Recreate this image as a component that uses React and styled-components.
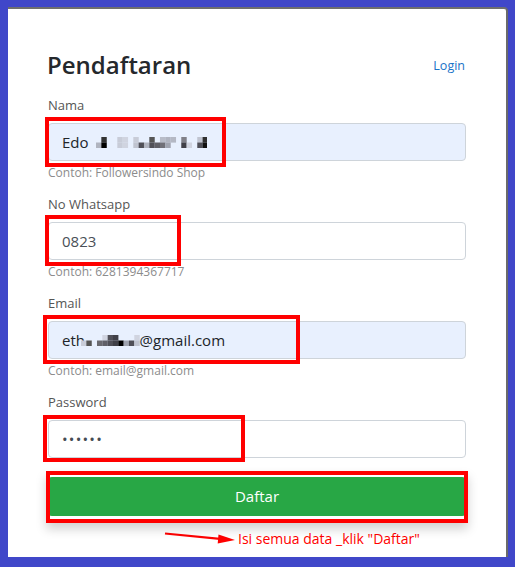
import React from "react";
import styled, { createGlobalStyle } from "styled-components";

const GlobalStyle = createGlobalStyle`
  * { box-sizing: border-box; }
  html, body {
    margin: 0;
    padding: 0;
    background: #4047c9;
  }
  body {
    font-family: "Open Sans", "Noto Sans", sans-serif;
  }
`;

const Page = styled.div`
  width: 515px;
  height: 567px;
  padding: 7px 0 0 8px;
`;

const Card = styled.div`
  width: 500px;
  height: 550px;
  background: #fff;
  border-top: 2px solid #6f6f6f;
  border-right: 2px solid #6a6a6a;
  border-top-right-radius: 4px;
  padding: 42px 40px 0 40px;
`;

const Header = styled.div`
  display: flex;
  justify-content: space-between;
  align-items: center;
  margin-bottom: 16px;
`;

const Title = styled.h1`
  margin: 0 0 0 -1px;
  font-size: 24px;
  font-weight: 600;
  line-height: 1.2;
  color: #25282c;
`;

const LoginLink = styled.a`
  font-size: 12.5px;
  color: #1a73c8;
  text-decoration: none;
  margin-right: 1px;
`;

const Field = styled.div`
  margin-bottom: ${(p) => (p.$last ? "19px" : "14px")};
`;

const Label = styled.div`
  font-size: 13px;
  line-height: 18px;
  color: #555;
  margin-bottom: 9px;
`;

const InputWrap = styled.div`
  position: relative;
`;

const InputBox = styled.div`
  height: 38px;
  border: 1px solid #ced4da;
  border-radius: 4px;
  background: ${(p) => (p.$autofill ? "#e8f0fe" : "#fff")};
  padding: 0 13px;
  font-size: 15px;
  line-height: 36px;
  color: ${(p) => (p.$muted ? "#495057" : "#212529")};
  white-space: nowrap;
`;

const Dots = styled.span`
  font-size: 15px;
  letter-spacing: 1.2px;
  color: #454c54;
`;

const Hint = styled.div`
  font-size: 12px;
  line-height: 16px;
  color: #8c8c8c;
  margin-top: 4px;
`;

const Mark = styled.div`
  position: absolute;
  left: ${(p) => p.$x}px;
  top: ${(p) => p.$y}px;
  width: ${(p) => p.$w}px;
  height: ${(p) => p.$h}px;
  border: 4px solid #ff0000;
  pointer-events: none;
  box-shadow: ${(p) => (p.$shadow ? "0 6px 10px rgba(0,0,0,0.18)" : "none")};
`;

const SubmitWrap = styled.div`
  position: relative;
`;

const Submit = styled.button`
  display: block;
  width: 100%;
  height: 39px;
  border: none;
  border-radius: 4px;
  background: #28a745;
  color: #fff;
  font-family: inherit;
  font-size: 15px;
`;

const Note = styled.div`
  display: flex;
  align-items: flex-start;
  margin-top: 14px;
  padding-left: 115px;
  gap: 1px;
`;

const NoteText = styled.span`
  color: #f00;
  font-size: 14px;
  line-height: 18px;
`;

const MosaicSvg = styled.svg`
  vertical-align: baseline;
  margin-left: ${(p) => p.$gap}px;
`;

const CELL = 5.33;

const nameCells = [
  [1, 0, "#333"], [4, 0, "#c8ccd8"], [5, 0, "#d0d4e0"], [7, 0, "#c8ccd8"],
  [10, 0, "#555"], [12, 0, "#b8bcc8"], [13, 0, "#b0b4c0"], [14, 0, "#b4b8c4"],
  [16, 0, "#808088"], [19, 0, "#c0c4d0"], [20, 0, "#303030"],
  [0, 1, "#b0b4c0"], [1, 1, "#000"], [4, 1, "#c8ccd8"], [5, 1, "#d0d4e0"],
  [7, 1, "#c0c4d0"], [8, 1, "#505058"], [9, 1, "#b0b4c0"], [10, 1, "#505058"],
  [11, 1, "#606068"], [12, 1, "#707078"], [13, 1, "#a0a4b0"], [16, 1, "#404048"],
  [17, 1, "#d0d4e0"], [19, 1, "#505058"], [20, 1, "#111"],
];

const emailCells = [
  [0, 1, "#c8ccd8"], [1, 1, "#555"], [3, 1, "#6a6a70"], [4, 0, "#d0d4e0"],
  [4, 1, "#606068"], [5, 0, "#505058"], [5, 1, "#505058"], [6, 0, "#404048"],
  [6, 1, "#404048"], [7, 1, "#000"], [8, 1, "#a0a4b0"], [9, 1, "#505058"],
  [10, 0, "#d0d4e0"], [10, 1, "#c0c4d0"],
];

function Mosaic({ cells, cols, gap }) {
  return (
    <MosaicSvg $gap={gap} width={cols * CELL} height={11} viewBox={`0 0 ${cols * CELL} 11`}>
      {cells.map(([c, r, color]) => (
        <rect key={`${c}-${r}`} x={c * CELL} y={r * 5.5} width={CELL + 0.1} height={5.6} fill={color} />
      ))}
    </MosaicSvg>
  );
}

function Arrow() {
  return (
    <svg width="74" height="16" viewBox="0 0 74 16">
      <line x1="2" y1="3.5" x2="57" y2="8.8" stroke="#f00" strokeWidth="2.2" />
      <polygon points="55.5,4.4 72,10 54.7,13.4" fill="#f00" />
    </svg>
  );
}

export default function App() {
  return (
    <>
      <GlobalStyle />
      <Page>
        <Card>
          <Header>
            <Title>Pendaftaran</Title>
            <LoginLink href="#">Login</LoginLink>
          </Header>

          <Field>
            <Label>Nama</Label>
            <InputWrap>
              <InputBox $autofill>
                Edo
                <Mosaic cells={nameCells} cols={21} gap={7} />
              </InputBox>
              <Mark $x={-3} $y={-6} $w={181} $h={50} />
            </InputWrap>
            <Hint>Contoh: Followersindo Shop</Hint>
          </Field>

          <Field>
            <Label>No Whatsapp</Label>
            <InputWrap>
              <InputBox $muted>0823</InputBox>
              <Mark $x={-3} $y={-7} $w={136} $h={51} />
            </InputWrap>
            <Hint>Contoh: 6281394367717</Hint>
          </Field>

          <Field>
            <Label>Email</Label>
            <InputWrap>
              <InputBox $autofill>
                eth
                <Mosaic cells={emailCells} cols={11} gap={-4} />
                @gmail.com
              </InputBox>
              <Mark $x={-5} $y={-6} $w={257} $h={49} />
            </InputWrap>
            <Hint>Contoh: email@gmail.com</Hint>
          </Field>

          <Field $last>
            <Label>Password</Label>
            <InputWrap>
              <InputBox>
                <Dots>••••••</Dots>
              </InputBox>
              <Mark $x={-5} $y={-5} $w={202} $h={47} />
            </InputWrap>
          </Field>

          <SubmitWrap>
            <Submit type="button">Daftar</Submit>
            <Mark $x={-2} $y={-6} $w={422} $h={52} $shadow />
          </SubmitWrap>

          <Note>
            <Arrow />
            <NoteText>Isi semua data _klik "Daftar"</NoteText>
          </Note>
        </Card>
      </Page>
    </>
  );
}
